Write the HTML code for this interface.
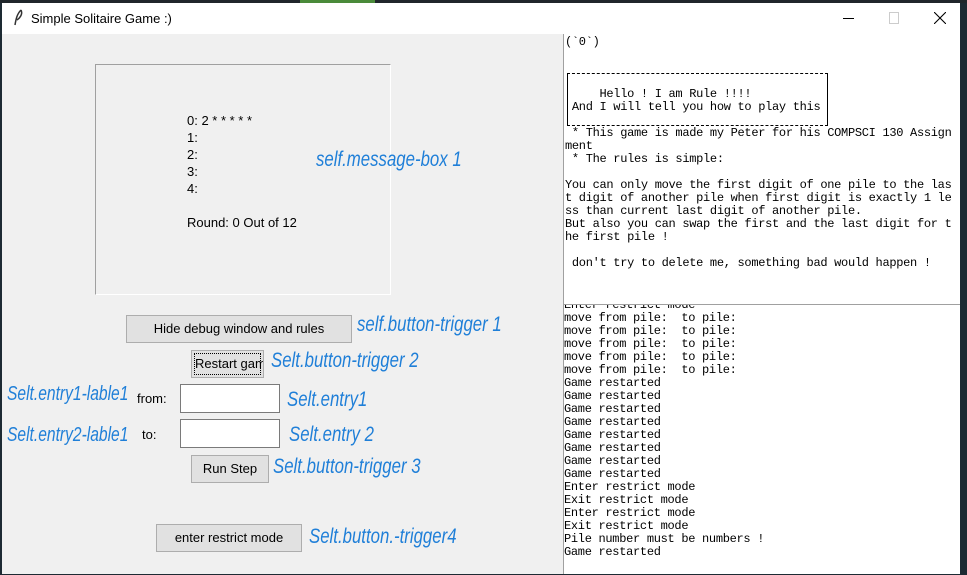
<!DOCTYPE html>
<html><head><meta charset="utf-8"><style>
*{margin:0;padding:0;box-sizing:border-box}
body{width:967px;height:575px;position:relative;overflow:hidden;background:#1d2a33;font-family:"Liberation Sans",sans-serif}
.a{position:absolute}
.t{font-size:13px;color:#000;white-space:pre}
.m{font-family:"Liberation Mono",monospace;font-size:12px;line-height:13px;white-space:pre;color:#000;letter-spacing:-0.3px}
.btn{position:absolute;background:#e1e1e1;border:1px solid #adadad;font-size:13px;text-align:center;color:#000}
.ent{position:absolute;background:#fff;border:1px solid #7a7a7a}
.h{position:absolute;color:#1f7fd8;font-family:"Liberation Sans Narrow","Liberation Sans",sans-serif;font-style:italic;font-size:21px;white-space:nowrap;transform:scaleX(0.8);transform-origin:left}
</style></head><body>
<div class="a" style="left:0;top:0;width:967px;height:3px;background:#20262b"></div>
<div class="a" style="left:300px;top:0;width:75px;height:3px;background:#4a8a3a"></div>
<div class="a" style="left:2px;top:3px;width:958px;height:31px;background:#fff"></div>
<svg class="a" style="left:12px;top:9px" width="14" height="18"><path d="M9 1 C5 5 4 10 3 16 M9 1 C11 5 8 9 5 11" stroke="#333" stroke-width="1.5" fill="none"/></svg>
<div class="a t" style="left:31px;top:11px">Simple Solitaire Game :)</div>
<div class="a" style="left:843px;top:18px;width:11px;height:1px;background:#000"></div>
<div class="a" style="left:889px;top:12px;width:10px;height:12px;border:1px solid #ccc"></div>
<svg class="a" style="left:934px;top:12px" width="12" height="12"><path d="M0 0L12 12M12 0L0 12" stroke="#000" stroke-width="1.1"/></svg>
<div class="a" style="left:2px;top:34px;width:561px;height:540px;background:#f0f0f0"></div>
<div class="a" style="left:95px;top:64px;width:296px;height:231px;border:1px solid #a0a0a0;border-right-color:#fff;border-bottom-color:#fff"></div>
<div class="a t" style="left:187px;top:112px;line-height:17px">0: 2 * * * * *
1:
2:
3:
4:

Round: 0 Out of 12</div>
<div class="h" style="left:316px;top:148px">self.message-box 1</div>
<div class="btn" style="left:126px;top:315px;width:226px;height:28px;line-height:26px">Hide debug window and rules</div>
<div class="h" style="left:357px;top:313px">self.button-trigger 1</div>
<div class="btn" style="left:191px;top:350px;width:73px;height:28px;line-height:26px;overflow:hidden;white-space:nowrap;text-align:left;padding-left:3px;outline:1px dotted #000;outline-offset:-4px">Restart game</div>
<div class="h" style="left:271px;top:349px">Selt.button-trigger 2</div>
<div class="h" style="left:7px;top:383px;font-size:20px;transform:scaleX(0.78)">Selt.entry1-lable1</div>
<div class="a t" style="left:137px;top:391px">from:</div>
<div class="ent" style="left:180px;top:384px;width:100px;height:29px"></div>
<div class="h" style="left:287px;top:388px">Selt.entry1</div>
<div class="h" style="left:7px;top:424px;font-size:20px;transform:scaleX(0.78)">Selt.entry2-lable1</div>
<div class="a t" style="left:142px;top:427px">to:</div>
<div class="ent" style="left:180px;top:419px;width:100px;height:29px"></div>
<div class="h" style="left:289px;top:423px">Selt.entry 2</div>
<div class="btn" style="left:191px;top:455px;width:78px;height:28px;line-height:26px">Run Step</div>
<div class="h" style="left:273px;top:455px">Selt.button-trigger 3</div>
<div class="btn" style="left:156px;top:524px;width:146px;height:28px;line-height:26px">enter restrict mode</div>
<div class="h" style="left:309px;top:525px">Selt.button.-trigger4</div>
<div class="a" style="left:563px;top:34px;width:397px;height:540px;background:#fff;border-left:1px solid #a0a0a0"></div>
<div class="a" style="left:563px;top:304px;width:397px;height:1px;background:#a0a0a0"></div>
<div class="a" style="left:567px;top:73px;width:261px;height:53px;border-left:1px solid #000;border-right:1px solid #000;border-top:1px dashed #000;border-bottom:1px dashed #000"></div>
<div class="a m" style="left:565px;top:36px">(`0`)



     Hello ! I am Rule !!!!
 And I will tell you how to play this

 * This game is made my Peter for his COMPSCI 130 Assign
ment
 * The rules is simple:

You can only move the first digit of one pile to the las
t digit of another pile when first digit is exactly 1 le
ss than current last digit of another pile.
But also you can swap the first and the last digit for t
he first pile !

 don't try to delete me, something bad would happen !</div>
<div class="a" style="left:563px;top:305px;width:397px;height:268px;overflow:hidden">
<div class="a m" style="left:1px;top:-6px">Enter restrict mode
move from pile:  to pile:
move from pile:  to pile:
move from pile:  to pile:
move from pile:  to pile:
move from pile:  to pile:
Game restarted
Game restarted
Game restarted
Game restarted
Game restarted
Game restarted
Game restarted
Game restarted
Enter restrict mode
Exit restrict mode
Enter restrict mode
Exit restrict mode
Pile number must be numbers !
Game restarted</div></div>
</body></html>
